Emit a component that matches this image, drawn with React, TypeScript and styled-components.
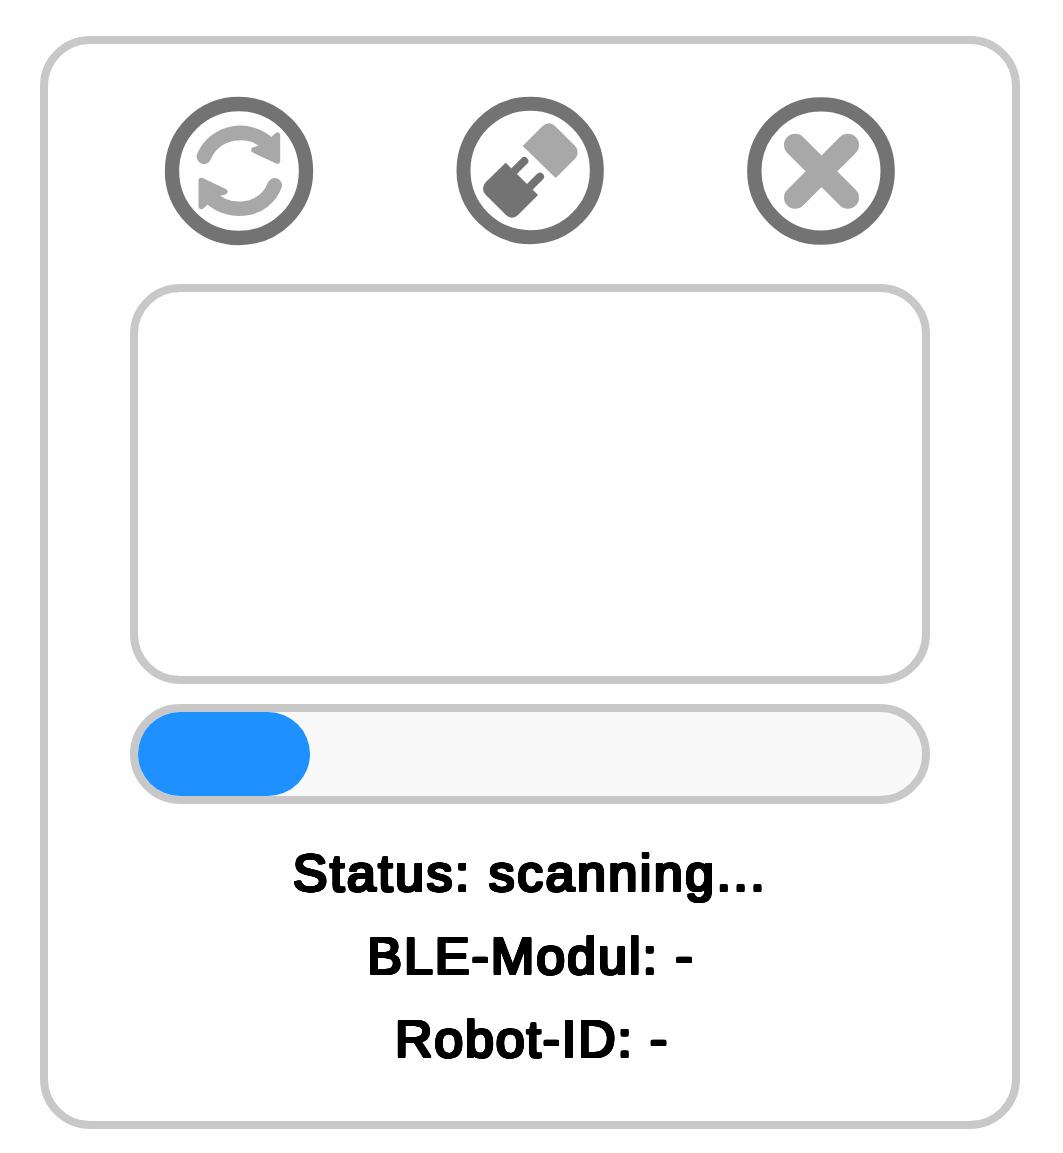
import React from "react";
import styled, { createGlobalStyle } from "styled-components";

const GlobalStyle = createGlobalStyle`
  * { box-sizing: border-box; }
  body { margin: 0; background: #fefefe; }
`;

const Page = styled.main`
  height: 1153px;
  padding: 36px 43px 24px 40px;
  font-family: "Liberation Sans", Arial, sans-serif;
`;

const Card = styled.section`
  height: 1093px;
  display: flex;
  flex-direction: column;
  align-items: center;
  padding-top: 41px;
  border: 8px solid #c8c8c8;
  border-radius: 50px;
`;

const Toolbar = styled.div`
  display: flex;
  gap: 120px;
  margin-bottom: 29px;
`;

const IconButton = styled.button`
  width: 170px;
  height: 170px;
  padding: 0;
  border: 0;
  background: none;
  svg { display: block; width: 100%; height: 100%; }
`;

const DeviceList = styled.div`
  width: 800px;
  height: 400px;
  border: 8px solid #c8c8c8;
  border-radius: 50px;
`;

const Track = styled.div`
  width: 800px;
  height: 100px;
  margin-top: 20px;
  border: 8px solid #c8c8c8;
  border-radius: 50px;
  background: #f9f9f9;
`;

const Fill = styled.div`
  height: 100%;
  border-radius: 42px;
  background: #1e90ff;
`;

const StatusList = styled.div`
  display: flex;
  flex-direction: column;
  align-items: center;
  margin-top: 28px;
`;

/* A ring of shadows thickens the strokes and rounds their ends. */
const roundedWeight = Array.from({ length: 16 }, (_, i) => {
  const angle = (i * Math.PI) / 8;
  return `${(Math.cos(angle) * 1.4).toFixed(2)}px ${(Math.sin(angle) * 1.4).toFixed(2)}px 0 #000`;
}).join(", ");

const StatusLine = styled.div<{ $spacing: number; $indent?: number }>`
  height: 83px;
  padding-left: ${(p) => p.$indent ?? 0}px;
  line-height: 83px;
  font-size: 52px;
  font-weight: 400;
  white-space: nowrap;
  color: #000;
  text-shadow: ${roundedWeight};
  letter-spacing: ${(p) => p.$spacing}px;
`;

const DARK = "#737373";
const LIGHT = "#a8a8a8";

function RefreshIcon() {
  return (
    <svg viewBox="0 0 510 510">
      <circle cx="252" cy="258" r="201" fill="none" stroke={DARK} strokeWidth="43" />
      <g fill={LIGHT} stroke={LIGHT}>
        <path d="M147 215 C177 139 283 118 344 181" fill="none" strokeWidth="44" strokeLinecap="round" />
        <path d="M367 151 V228 L297 195 L325 187 L340 175 Z" strokeWidth="17" strokeLinejoin="round" />
        <path d="M359 301 C331 377 227 396 164 335" fill="none" strokeWidth="44" strokeLinecap="round" />
        <path d="M139 364 V287 L209 320 L181 328 L166 340 Z" strokeWidth="17" strokeLinejoin="round" />
      </g>
    </svg>
  );
}

function PlugIcon() {
  return (
    <svg viewBox="0 0 510 510">
      <circle cx="255.5" cy="256.5" r="200" fill="none" stroke={DARK} strokeWidth="42" />
      <path fill={LIGHT} d="M233 183 L293 123 Q301 115 312 115 Q322 115 330 123 L391 184 Q399 192 398 204 Q398 213 390 221 L332 279 Z" />
      <path fill={DARK} d="M182 233 L279 330 L219 390 Q211 398 201 398 Q191 398 183 390 L122 329 Q114 321 114 311 Q114 300 122 292 Z" />
      <path d="M205 261 L238 228 M252 308 L285 275" fill="none" stroke={DARK} strokeWidth="24" strokeLinecap="round" />
    </svg>
  );
}

function CloseIcon() {
  return (
    <svg viewBox="0 0 510 510">
      <circle cx="258" cy="258" r="200" fill="none" stroke={DARK} strokeWidth="43" />
      <path d="M180.500 180 L338.500 338 M338.500 180 L180.500 338" stroke={LIGHT} strokeWidth="67" strokeLinecap="round" />
    </svg>
  );
}

export default function App() {
  const progress = 22;
  return (
    <>
      <GlobalStyle />
      <Page>
        <Card>
          <Toolbar>
            <IconButton><RefreshIcon /></IconButton>
            <IconButton><PlugIcon /></IconButton>
            <IconButton><CloseIcon /></IconButton>
          </Toolbar>
          <DeviceList />
          <Track><Fill style={{ width: `${progress}%` }} /></Track>
          <StatusList>
            <StatusLine $spacing={2.45}>Status: scanning...</StatusLine>
            <StatusLine $spacing={2} $indent={2}>BLE-Modul: -</StatusLine>
            <StatusLine $spacing={1.8} $indent={4}>Robot-ID: -</StatusLine>
          </StatusList>
        </Card>
      </Page>
    </>
  );
}
